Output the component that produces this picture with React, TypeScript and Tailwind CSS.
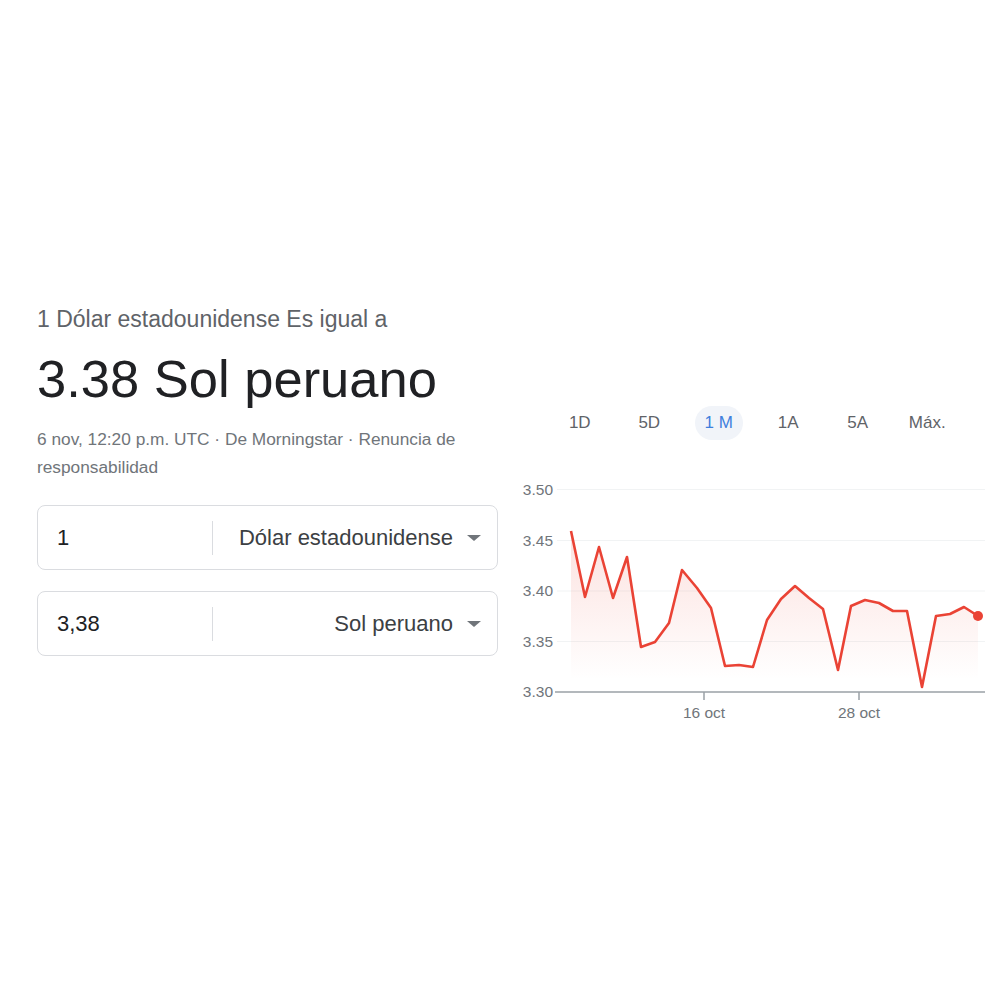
import React from 'react';

const points: [number, number][] = [
    [571, 531], [585, 597], [599, 547], [613, 598], [627, 557], [641, 647],
    [655, 642], [669, 623], [682, 570], [697, 588], [711, 608], [725, 666],
    [739, 665], [753, 667], [767, 620], [781, 599], [795, 586], [809, 598],
    [823, 609], [838, 670], [851, 606], [865, 600], [879, 603], [893, 611],
    [907, 611], [922, 687], [936, 616], [950, 614], [964, 607], [978, 616],
];

const grid = [
    { label: '3.50', y: 489.5 },
    { label: '3.45', y: 540.5 },
    { label: '3.40', y: 591 },
    { label: '3.35', y: 641.5 },
];

const ranges = ['1D', '5D', '1 M', '1A', '5A', 'Máx.'];

const CurrencyBox = ({ amount, currency }: { amount: string; currency: string }) => (
    <div className="flex h-[65px] items-center rounded-lg border border-[#dadce0]">
        <div className="w-[174px] pl-[19px] text-[22px] text-[#202124]">{amount}</div>
        <div className="h-[34px] w-px bg-[#dadce0]" />
        <div className="flex flex-1 items-center justify-end pr-[16px]">
            <span className="text-[22px] text-[#3c4043]">{currency}</span>
            <span className="ml-[14px] h-0 w-0 border-x-[7px] border-t-[6px] border-x-transparent border-t-[#70757a]" />
        </div>
    </div>
);

const Chart = () => {
    const line = points.map(([x, y]) => `${x},${y}`).join(' ');
    const area = `571,692 ${line} 978,692`;
    return (
        <svg width="475" height="260" viewBox="515 470 475 260" className="block">
            <defs>
                <linearGradient id="fade" x1="0" y1="531" x2="0" y2="680" gradientUnits="userSpaceOnUse">
                    <stop offset="0" stopColor="#ea4335" stopOpacity="0.16" />
                    <stop offset="1" stopColor="#ea4335" stopOpacity="0" />
                </linearGradient>
            </defs>
            {grid.map((g) => (
                <g key={g.label}>
                    <line x1="557" x2="985" y1={g.y} y2={g.y} stroke="#f1f3f4" strokeWidth="1" />
                    <text x="553" y={g.y + 5} textAnchor="end" fontSize="15.5" fill="#70757a">{g.label}</text>
                </g>
            ))}
            <polygon points={area} fill="url(#fade)" />
            <line x1="555" x2="985" y1="692" y2="692" stroke="#9aa0a6" strokeWidth="1.5" />
            <text x="553" y="697" textAnchor="end" fontSize="15.5" fill="#70757a">3.30</text>
            <line x1="704" x2="704" y1="692" y2="700" stroke="#9aa0a6" strokeWidth="1.5" />
            <line x1="859" x2="859" y1="692" y2="700" stroke="#9aa0a6" strokeWidth="1.5" />
            <text x="704" y="718" textAnchor="middle" fontSize="15.5" fill="#70757a">16 oct</text>
            <text x="859" y="718" textAnchor="middle" fontSize="15.5" fill="#70757a">28 oct</text>
            <polyline points={line} fill="none" stroke="#ea4335" strokeWidth="2.6" strokeLinejoin="round" />
            <circle cx="978" cy="616" r="5" fill="#ea4335" />
        </svg>
    );
};

export default function App() {
    return (
        <div className="flex h-[1000px] w-[1000px] items-start bg-white pl-[37px] pt-[305px] font-['Liberation_Sans',Arial,sans-serif]">
            <div className="w-[461px]">
                <div className="text-[23px] leading-[28px] text-[#5f6368]">1 Dólar estadounidense Es igual a</div>
                <div className="mt-[16px] text-[52.5px] leading-[60px] text-[#202124]">3.38 Sol peruano</div>
                <div className="mt-[16px] text-[17.3px] leading-[28px] text-[#70757a]">
                    6 nov, 12:20 p.m. UTC · De Morningstar · Renuncia de responsabilidad
                </div>
                <div className="mt-[24px]">
                    <CurrencyBox amount="1" currency="Dólar estadounidense" />
                </div>
                <div className="mt-[21px]">
                    <CurrencyBox amount="3,38" currency="Sol peruano" />
                </div>
            </div>
            <div className="ml-[17px] w-[475px] pt-[101px]">
                <div className="flex h-[34px] pl-[30px]">
                    {ranges.map((r) => (
                        <div key={r} className="flex w-[69.5px] items-center justify-center">
                            {r === '1 M' ? (
                                <span className="flex h-[34px] w-[48px] items-center justify-center rounded-full bg-[#f1f4f9] text-[17px] text-[#3f7fdd]">{r}</span>
                            ) : (
                                <span className="text-[17px] text-[#5f6368]">{r}</span>
                            )}
                        </div>
                    ))}
                </div>
                <div className="mt-[30px]">
                    <Chart />
                </div>
            </div>
        </div>
    );
}
